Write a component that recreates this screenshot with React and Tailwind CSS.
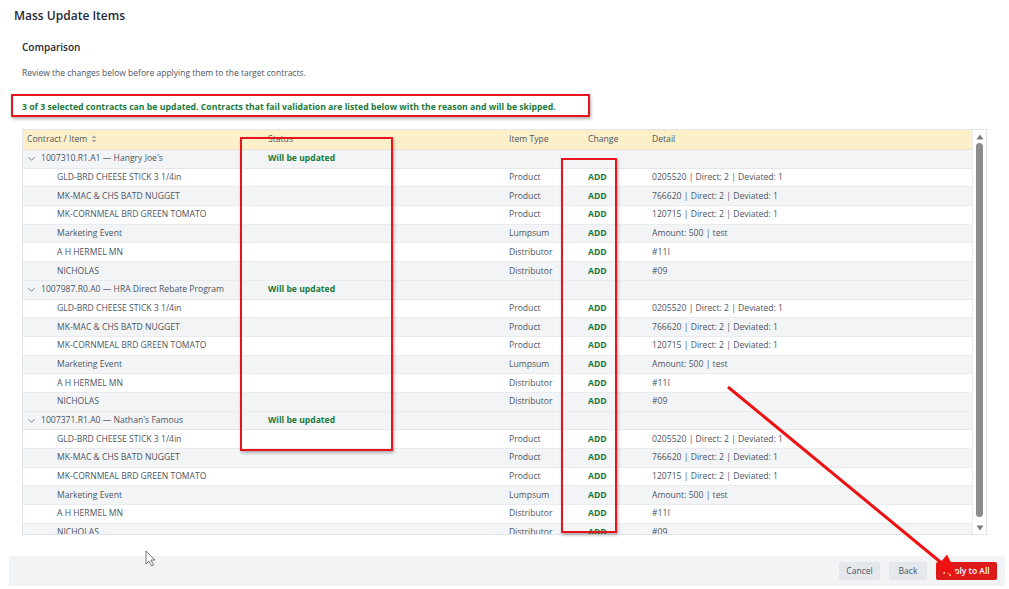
import React from 'react';

const GROUPS = [
  { id: '1007310.R1.A1', name: "Hangry Joe's" },
  { id: '1007987.R0.A0', name: 'HRA Direct Rebate Program' },
  { id: '1007371.R1.A0', name: "Nathan's Famous" },
];

const ITEMS = [
  { name: 'GLD-BRD CHEESE STICK 3 1/4in', type: 'Product', detail: '0205520 | Direct: 2 | Deviated: 1' },
  { name: 'MK-MAC & CHS BATD NUGGET', type: 'Product', detail: '766620 | Direct: 2 | Deviated: 1' },
  { name: 'MK-CORNMEAL BRD GREEN TOMATO', type: 'Product', detail: '120715 | Direct: 2 | Deviated: 1' },
  { name: 'Marketing Event', type: 'Lumpsum', detail: 'Amount: 500 | test' },
  { name: 'A H HERMEL MN', type: 'Distributor', detail: '#11I' },
  { name: 'NICHOLAS', type: 'Distributor', detail: '#09' },
];

const COLS = 'grid grid-cols-[241px_241px_79px_64px_1fr]';

function Chevron() {
  return (
    <svg width="9" height="9" viewBox="0 0 10 10" className="mr-[5px] shrink-0">
      <path d="M1.5 3.5 L5 7 L8.5 3.5" fill="none" stroke="#6b7280" strokeWidth="1" />
    </svg>
  );
}

function SortIcon() {
  return (
    <svg width="6" height="8" viewBox="0 0 6 8" className="ml-[4px]">
      <path d="M3 0.5 L5.5 3 L0.5 3 Z" fill="#9ca3af" />
      <path d="M3 7.5 L5.5 5 L0.5 5 Z" fill="#9ca3af" />
    </svg>
  );
}

export default function App() {
  const rows = [];
  GROUPS.forEach((g) => {
    rows.push({ group: true, ...g });
    ITEMS.forEach((it) => rows.push({ group: false, ...it }));
  });

  return (
    <div className="relative w-[1009px] h-[589px] bg-white overflow-hidden text-[#374151]" style={{ fontFamily: "'Open Sans', sans-serif" }}>
      <div className="pl-[14px] pt-[7px] text-[12px] font-semibold leading-[18px] text-[#1f2937]">Mass Update Items</div>

      <div className="pl-[22px] pr-[22px]">
        <div className="mt-[15px] text-[10px] font-semibold leading-[14px] text-[#1f2937]">Comparison</div>
        <div className="mt-[13px] text-[8.5px] leading-[12px] text-[#4b5563]">Review the changes below before applying them to the target contracts.</div>
        <div className="mt-[22px] text-[8.7px] font-bold leading-[12px] text-[#1a7a3a]">
          3 of 3 selected contracts can be updated. Contracts that fail validation are listed below with the reason and will be skipped.
        </div>

        {/* table */}
        <div className="mt-[16px] w-[965px] h-[406px] border border-[#e1e4e8] flex">
          <div className="flex-1 overflow-hidden text-[8.6px] text-[#4b5563]">
            <div className={`${COLS} h-[20px] items-center bg-[#fdefc8] border-b border-[#e9e2c8] text-[#4b5563]`}>
              <div className="pl-[4px] flex items-center">Contract / Item<SortIcon /></div>
              <div className="pl-[4px]">Status</div>
              <div className="pl-[4px]">Item Type</div>
              <div className="pl-[4px]">Change</div>
              <div className="pl-[4px]">Detail</div>
            </div>
            {rows.map((r, i) =>
              r.group ? (
                <div key={i} className={`${COLS} h-[18.7px] items-center bg-[#f3f4f6] border-b border-[#e5e7eb]`}>
                  <div className="pl-[4px] flex items-center text-[#4b5563]"><Chevron />{r.id} — {r.name}</div>
                  <div className="pl-[4px] font-bold text-[#1a7a3a]">Will be updated</div>
                  <div />
                  <div />
                  <div />
                </div>
              ) : (
                <div key={i} className={`${COLS} h-[18.7px] items-center border-b border-[#e9ebee] ${i % 7 % 2 === 1 ? 'bg-white' : 'bg-[#f3f4f6]'}`}>
                  <div className="pl-[34px] whitespace-nowrap">{r.name}</div>
                  <div />
                  <div className="pl-[4px]">{r.type}</div>
                  <div className="pl-[4px] font-bold text-[#1a7a3a]">ADD</div>
                  <div className="pl-[4px]">{r.detail}</div>
                </div>
              )
            )}
          </div>
          {/* scrollbar */}
          <div className="w-[14px] shrink-0 flex flex-col items-center bg-white border-l border-[#eceef0]">
            <svg width="8" height="6" viewBox="0 0 8 6" className="mt-[4px]"><path d="M4 0.5 L7.5 5.5 L0.5 5.5 Z" fill="#7a7a7a" /></svg>
            <div className="mt-[3px] w-[7px] flex-1 rounded-[4px] bg-[#8c8c8c]" />
            <svg width="8" height="6" viewBox="0 0 8 6" className="mt-[8px] mb-[3px]"><path d="M4 5.5 L7.5 0.5 L0.5 0.5 Z" fill="#7a7a7a" /></svg>
          </div>
        </div>
      </div>

      {/* footer */}
      <div className="mt-[21px] ml-[9px] w-[996px] h-[30px] bg-[#f2f3f5] flex items-center justify-end gap-[9px] pr-[8px] text-[8.5px]">
        <button className="h-[18px] w-[41px] rounded-[2px] bg-[#e4e7eb] text-[#4b5563]">Cancel</button>
        <button className="h-[18px] w-[38px] rounded-[2px] bg-[#e4e7eb] text-[#4b5563]">Back</button>
        <button className="h-[18px] w-[61px] rounded-[2px] bg-[#dd1a1a] text-white font-semibold">Apply to All</button>
      </div>

      {/* annotations */}
      <div className="absolute left-[11px] top-[94px] w-[579px] h-[23px] border-2 border-[#e8141c] shadow-[1px_2px_3px_rgba(0,0,0,0.3)]" />
      <div className="absolute left-[240px] top-[137px] w-[153px] h-[314px] border-2 border-[#e8141c] shadow-[1px_2px_3px_rgba(0,0,0,0.3)]" />
      <div className="absolute left-[561px] top-[158px] w-[56px] h-[375px] border-2 border-[#e8141c] shadow-[1px_2px_3px_rgba(0,0,0,0.3)]" />
      <svg className="absolute left-0 top-0 pointer-events-none" width="1009" height="589">
        <line x1="728" y1="387" x2="944" y2="565" stroke="#ee1111" strokeWidth="3" />
        <polygon points="958,577 935.5,568.5 947,554.5" fill="#ee1111" />
        <path d="M146 551 L146 564 L149 561 L151.5 566 L153.5 565 L151 560 L155 560 Z" fill="white" stroke="#555" strokeWidth="0.8" />
      </svg>
    </div>
  );
}
